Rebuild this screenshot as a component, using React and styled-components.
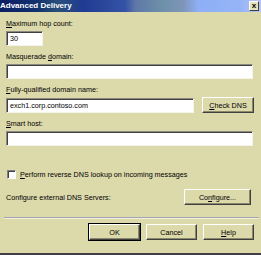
import React from 'react';
import styled, { createGlobalStyle } from 'styled-components';

const Global = createGlobalStyle`
  html, body {
    margin: 0;
    padding: 0;
    background: #dcd9ab;
  }
  * {
    box-sizing: border-box;
  }
`;

const Dialog = styled.div`
  width: 261px;
  height: 255px;
  background: #dcd9ab;
  border-bottom: 2px solid #404040;
  font-family: "Liberation Sans", Arial, sans-serif;
  font-size: 7.2px;
  color: #000;
  display: flex;
  flex-direction: column;
`;

const TitleBar = styled.div`
  height: 12px;
  display: flex;
  align-items: center;
  justify-content: space-between;
  padding-right: 2px;
  background: linear-gradient(
    90deg,
    #0b1f64 0%,
    #12306e 14%,
    #2a4f7a 22%,
    #1f3b93 32%,
    #3553a6 48%,
    #5f78a8 52%,
    #6d90a8 62%,
    #7e95b8 70%,
    #8eaff6 76%,
    #95b4f8 92%,
    #b8c4f2 100%
  );
`;

const Title = styled.span`
  color: #fff;
  font-weight: bold;
  font-size: 8px;
  line-height: 12px;
  white-space: nowrap;
`;

const CloseButton = styled.div`
  width: 10px;
  height: 10px;
  background: #e6e2b8;
  border: 1px solid;
  border-color: #fff #404040 #404040 #fff;
  display: flex;
  align-items: center;
  justify-content: center;
  font-size: 8px;
  font-weight: bold;
  line-height: 1;
`;

const Body = styled.div`
  flex: 1;
  display: flex;
  flex-direction: column;
  padding: 7px 7px 0 6px;
`;

const Label = styled.div`
  height: 10px;
  line-height: 10px;
  margin-bottom: 2px;
  white-space: nowrap;
`;

const Field = styled.div`
  width: ${p => p.$width || '247px'};
  height: 15px;
  background: #fff;
  border: 1px solid;
  border-color: #8a8a80 #f4f4ec #f4f4ec #8a8a80;
  box-shadow: inset 1px 1px 0 #404040;
  padding-left: 3px;
  line-height: 13px;
  margin-bottom: 6px;
`;

const Row = styled.div`
  display: flex;
  align-items: center;
  justify-content: space-between;
  margin-bottom: 6px;

  ${Field} {
    margin-bottom: 0;
  }
`;

const Button = styled.div`
  width: ${p => p.$width || '51px'};
  height: 16px;
  display: flex;
  align-items: center;
  justify-content: center;
  background: #dcd9ab;
  border: 1px solid;
  border-color: #fff #404040 #404040 #fff;
  box-shadow: ${p =>
    p.$default ? '0 0 0 1px #000, inset -1px -1px 0 #8a876a' : 'inset -1px -1px 0 #8a876a'};
  white-space: nowrap;
`;

const CheckRow = styled.div`
  display: flex;
  align-items: center;
  gap: 4px;
  margin-top: 17px;
  padding-left: 1px;
  height: 10px;
`;

const Box = styled.div`
  width: 9px;
  height: 9px;
  background: #fff;
  border: 1px solid;
  border-color: #808080 #fff #fff #808080;
  box-shadow: inset 1px 1px 0 #404040;
`;

const ConfigRow = styled.div`
  display: flex;
  align-items: center;
  justify-content: space-between;
  margin-top: 10px;
  padding-right: 3px;
`;

const Separator = styled.div`
  margin: 12px -5px 0 -2px;
  border-top: 1px solid #a3a3b8;
  border-bottom: 1px solid #f2f0d8;
`;

const Buttons = styled.div`
  display: flex;
  justify-content: flex-end;
  gap: 6px;
  margin-top: 5px;
`;

const U = styled.span`
  text-decoration: underline;
`;

export default function App() {
  return (
    <>
      <Global />
      <Dialog>
        <TitleBar>
          <Title>Advanced Delivery</Title>
          <CloseButton>x</CloseButton>
        </TitleBar>
        <Body>
          <Label><U>M</U>aximum hop count:</Label>
          <Field $width="37px">30</Field>
          <Label>Masquerade <U>d</U>omain:</Label>
          <Field />
          <Label><U>F</U>ully-qualified domain name:</Label>
          <Row>
            <Field $width="188px">exch1.corp.contoso.com</Field>
            <Button $width="52px"><U>C</U>heck DNS</Button>
          </Row>
          <Label><U>S</U>mart host:</Label>
          <Field />
          <CheckRow>
            <Box />
            <span><U>P</U>erform reverse DNS lookup on incoming messages</span>
          </CheckRow>
          <ConfigRow>
            <span>Configure external DNS Servers:</span>
            <Button $width="67px">Co<U>n</U>figure...</Button>
          </ConfigRow>
          <Separator />
          <Buttons>
            <Button $default>OK</Button>
            <Button>Cancel</Button>
            <Button><U>H</U>elp</Button>
          </Buttons>
        </Body>
      </Dialog>
    </>
  );
}
